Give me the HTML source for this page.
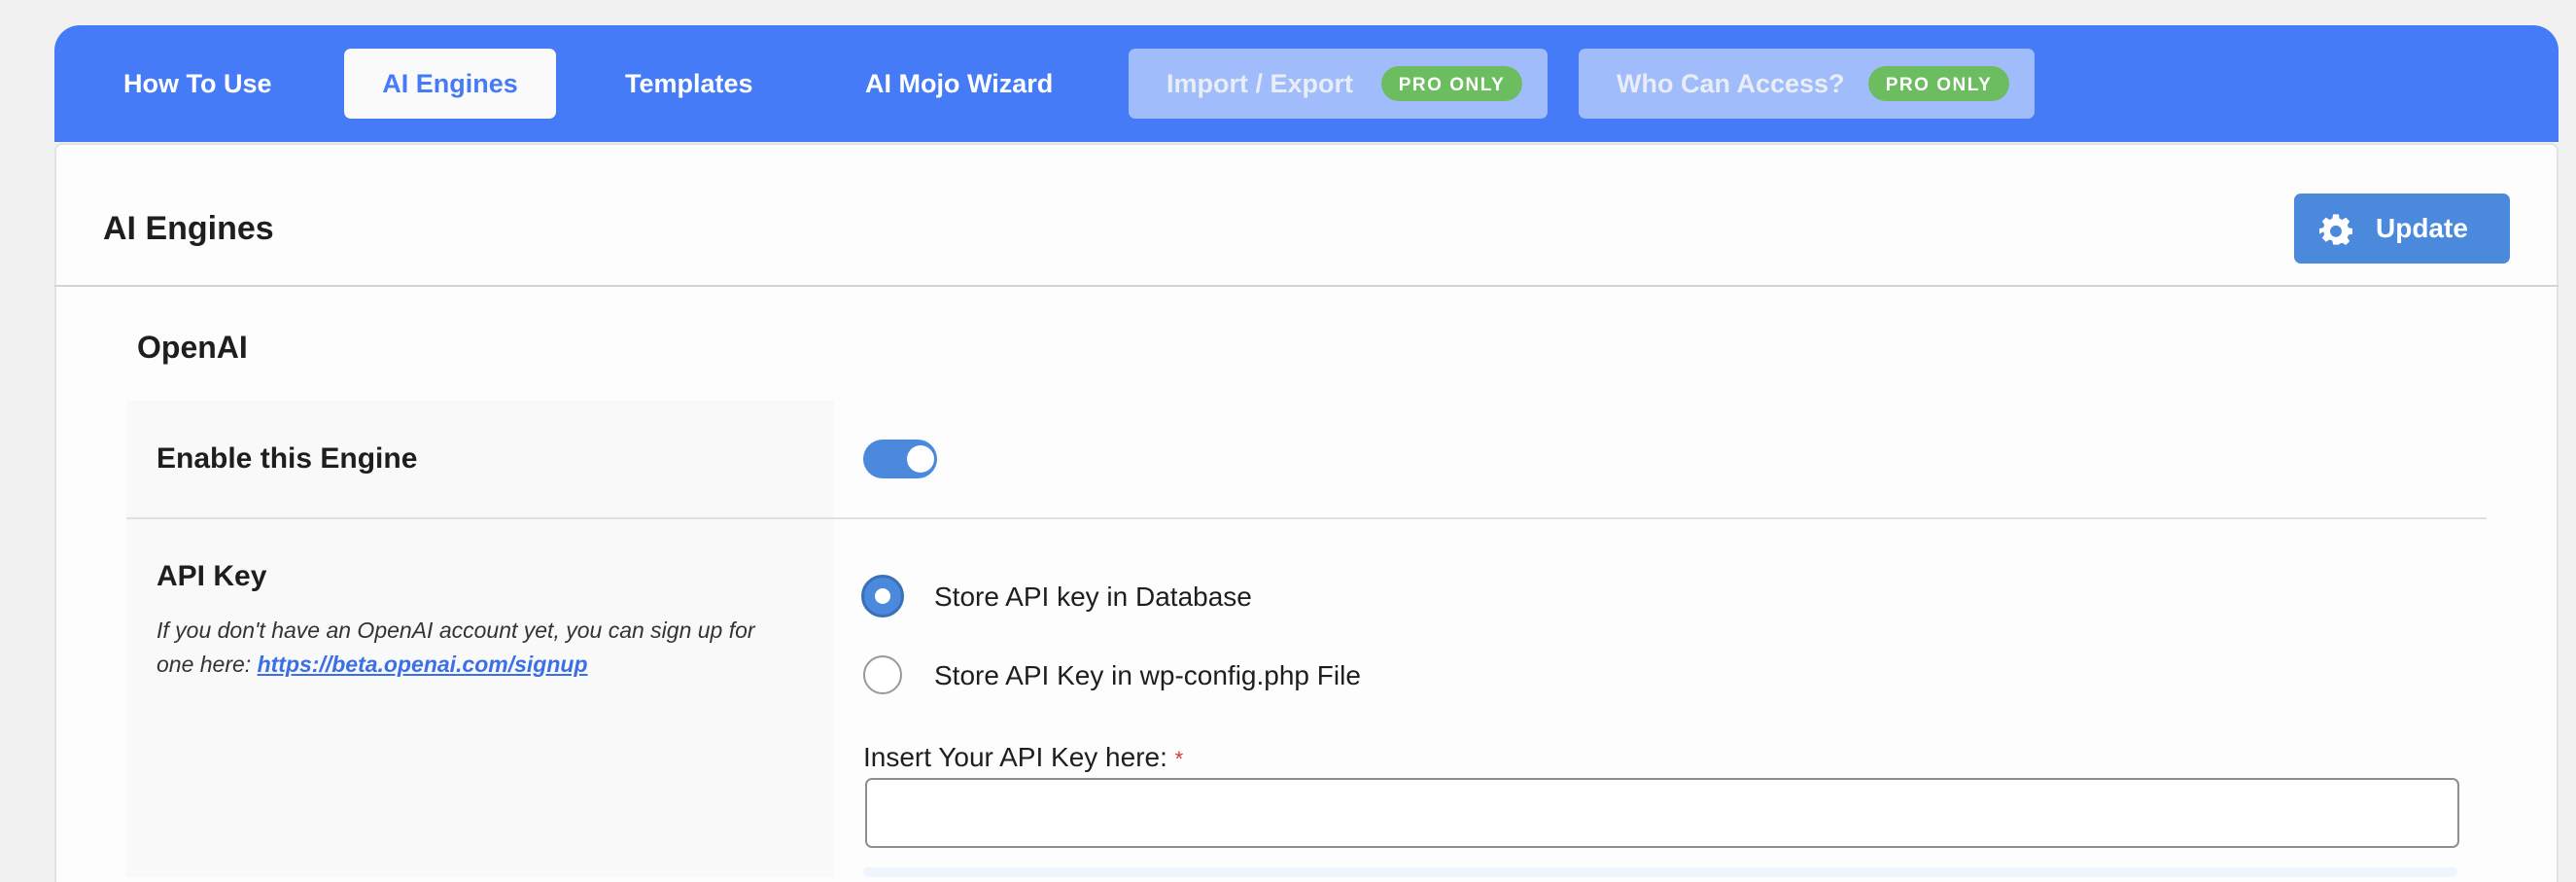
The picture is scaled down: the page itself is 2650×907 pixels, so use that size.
<!DOCTYPE html>
<html><head><meta charset="utf-8"><style>
*{margin:0;padding:0;box-sizing:border-box}
body{width:2650px;height:896px;background:#f1f1f1;font-family:"Liberation Sans",sans-serif;position:relative;overflow:hidden}
.a{position:absolute;white-space:nowrap}
.hdr{left:56px;top:26px;width:2576px;height:120px;background:#467bf7;border-radius:26px 26px 0 0}
.card{left:56px;top:147px;width:2576px;height:760px;background:#fdfdfd;border:2px solid #e2e3e5;border-bottom:none;border-radius:8px 8px 0 0}
.tab{top:50px;height:72px;border-radius:7px;color:#fff;font-weight:bold;font-size:27px;line-height:72px}
.dis{background:#a1bcfb;color:#e9edf5}
.badge{position:absolute;top:18px;height:36px;line-height:39px;border-radius:18px;background:#6bbd5f;color:#fff;font-size:19px;letter-spacing:1.5px;text-align:center;font-weight:bold}
.lbl{font-weight:bold;font-size:30px;color:#1e1e1e}
.txt{font-size:28px;color:#1e1e1e}
</style></head><body>
<div class="a hdr"></div>
<div class="a tab" style="left:127px">How To Use</div>
<div class="a tab" style="left:354px;width:218px;background:#fafafa;color:#467bf7;text-align:center">AI Engines</div>
<div class="a tab" style="left:643px">Templates</div>
<div class="a tab" style="left:890px">AI Mojo Wizard</div>
<div class="a tab dis" style="left:1161px;width:431px;padding-left:39px">Import / Export<span class="badge" style="left:260px;width:145px">PRO ONLY</span></div>
<div class="a tab dis" style="left:1624px;width:469px;padding-left:39px">Who Can Access?<span class="badge" style="left:298px;width:145px">PRO ONLY</span></div>
<div class="a card"></div>
<div class="a" style="left:106px;top:216px;font-size:34px;font-weight:bold;color:#1e1e1e">AI Engines</div>
<div class="a" style="left:2360px;top:199px;width:222px;height:72px;background:#4a89dc;border-radius:7px;color:#fff;font-weight:bold;font-size:28px;line-height:72px;padding-left:84px">Update</div>
<svg class="a" style="left:2386px;top:219px" width="34" height="34" viewBox="0 0 24 24"><path fill="#fff" d="M10 1h4l.6 3 2 1 2.6-1.7 2.8 2.8L20.3 8.7l.8 2 2.9.6v4l-2.9.6-.8 2 1.7 2.6-2.8 2.8-2.6-1.7-2 .8L14 23h-4l-.6-2.9-2-.8-2.6 1.7-2.8-2.8 1.7-2.6-.8-2L0 15.3v-4l2.9-.6.8-2L2 6.1l2.8-2.8L7.4 5l2-1z"/><circle cx="12" cy="13.3" r="4.2" fill="#4a89dc"/></svg>
<div class="a" style="left:56px;top:293px;width:2576px;height:2px;background:#d0d5da"></div>
<div class="a" style="left:141px;top:339px;font-size:32px;font-weight:bold;color:#1e1e1e">OpenAI</div>
<div class="a" style="left:130px;top:412px;width:728px;height:490px;background:#f9f9f9"></div>
<div class="a" style="left:130px;top:532px;width:2428px;height:2px;background:#e0e0e0"></div>
<div class="a lbl" style="left:161px;top:455px">Enable this Engine</div>
<div class="a" style="left:888px;top:452px;width:76px;height:40px;border-radius:20px;background:#4a89dc"></div>
<div class="a" style="left:933px;top:458px;width:28px;height:28px;border-radius:50%;background:#fff"></div>
<div class="a lbl" style="left:161px;top:576px">API Key</div>
<div class="a" style="left:161px;top:631px;font-size:23px;font-style:italic;color:#333;line-height:35px">If you don't have an OpenAI account yet, you can sign up for<br>one here: <span style="color:#3b6fe8;font-weight:bold;text-decoration:underline">https://beta.openai.com/signup</span></div>
<div class="a" style="left:886px;top:591px;width:44px;height:44px;border-radius:50%;background:#4a89dc;border:3px solid #3a70b8"></div>
<div class="a" style="left:900px;top:605px;width:16px;height:16px;border-radius:50%;background:#fff"></div>
<div class="a txt" style="left:961px;top:598px">Store API key in Database</div>
<div class="a" style="left:888px;top:674px;width:40px;height:40px;border-radius:50%;background:#fff;border:2px solid #999"></div>
<div class="a txt" style="left:961px;top:679px">Store API Key in wp-config.php File</div>
<div class="a txt" style="left:888px;top:763px">Insert Your API Key here: <span style="color:#d63638;font-size:22px">*</span></div>
<div class="a" style="left:890px;top:800px;width:1640px;height:72px;border:2px solid #8c8f94;border-radius:7px;background:#fefefe"></div>
<div class="a" style="left:888px;top:892px;width:1640px;height:10px;border-radius:6px;background:#eef5fd"></div>
</body></html>
